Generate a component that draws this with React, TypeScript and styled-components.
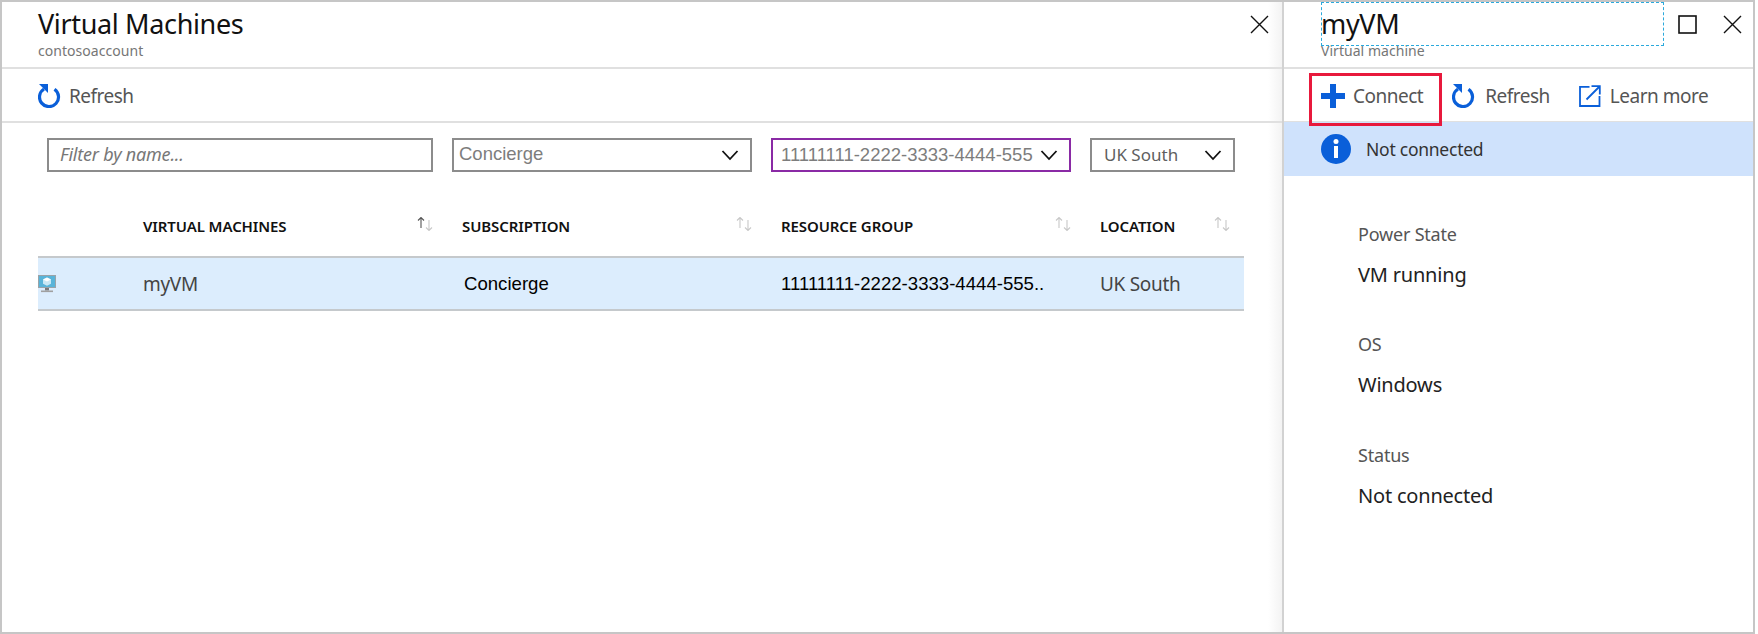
import React from "react";
import styled, { createGlobalStyle } from "styled-components";

const Global = createGlobalStyle`
  html, body { margin: 0; padding: 0; background: #fff; }
  body { font-family: "Open Sans", "Noto Sans", sans-serif; }
  * { box-sizing: border-box; }
`;

const BLUE = "#0a5fd9";
const SEGOE = `"Noto Sans", "Open Sans", sans-serif`;
const ARIAL = `"Liberation Sans", Arial, sans-serif`;

const Frame = styled.div`
  width: 1755px;
  height: 634px;
  display: flex;
  border: 2px solid #c6c6c6;
  font-family: ${SEGOE};
  overflow: hidden;
`;

const LeftPanel = styled.section`
  width: 1280px;
  flex: none;
  display: flex;
  flex-direction: column;
  background: linear-gradient(to right, #fff calc(100% - 14px), #f3f3f3);
`;

const RightPanel = styled.section`
  flex: 1;
  display: flex;
  flex-direction: column;
  position: relative;
  border-left: 2px solid #d2d2d2;
  min-width: 0;
`;

const Header = styled.header<{ $pad: number }>`
  height: 67px;
  flex: none;
  display: flex;
  align-items: flex-start;
  position: relative;
  padding-left: ${(p) => p.$pad}px;
  border-bottom: 2px solid #e0e0e0;
`;

const HeaderText = styled.div`
  flex: 1;
  display: flex;
  flex-direction: column;
`;

const Title = styled.h1`
  margin: 5px 0 0;
  font-size: 27px;
  line-height: 34px;
  font-weight: 400;
  color: #111;
  letter-spacing: -0.35px;
`;

const Subtitle = styled.div`
  font-size: 14px;
  line-height: 20px;
  color: #767676;
  letter-spacing: 0.04px;
`;

const DashedBox = styled.div`
  position: absolute;
  left: 37px;
  top: 0;
  width: 343px;
  height: 44px;
  border: 1px dashed #2aa9dc;
`;

const WindowButtons = styled.div<{ $gap: number; $right: number }>`
  display: flex;
  align-items: center;
  gap: ${(p) => p.$gap}px;
  margin: 13px ${(p) => p.$right}px 0 0;
  color: #111;
`;

const Toolbar = styled.div<{ $pad: number }>`
  height: 54px;
  flex: none;
  display: flex;
  align-items: center;
  padding: 2px 0 0 ${(p) => p.$pad}px;
  border-bottom: 2px solid #e0e0e0;
`;

const ToolButton = styled.div<{ $gap?: number; $ml?: number }>`
  display: flex;
  align-items: center;
  gap: ${(p) => p.$gap ?? 8}px;
  margin-left: ${(p) => p.$ml ?? 0}px;
  font-size: 19px;
  line-height: 26px;
  color: #555;
  letter-spacing: -0.5px;
`;

const ConnectHighlight = styled.div`
  position: absolute;
  left: 25px;
  top: 71px;
  width: 133px;
  height: 53px;
  border: 3px solid #e8193c;
`;

const RightBody = styled.div`
  display: flex;
  flex-direction: column;
  flex: 1;
`;

const FilterRow = styled.div`
  display: grid;
  grid-template-columns: 386px 300px 300px 145px;
  column-gap: 19px;
  padding: 15px 0 0 45px;
`;

const FilterBox = styled.div<{ $accent?: boolean; $arial?: boolean; $pad?: number }>`
  height: 34px;
  display: flex;
  align-items: center;
  justify-content: space-between;
  padding: 0 11px 0 ${(p) => p.$pad ?? 5}px;
  border: 2px solid ${(p) => (p.$accent ? "#8a2aa5" : "#8c8c8c")};
  font-family: ${(p) => (p.$arial ? ARIAL : SEGOE)};
  font-size: ${(p) => (p.$arial ? 18.5 : 17)}px;
  color: ${(p) => (p.$arial ? "#7d7d7d" : "#5f5f5f")};
  background: #fff;
`;

const FilterText = styled.span`
  margin-top: -2px;
`;

const FilterPlaceholder = styled(FilterText)`
  font-style: italic;
  color: #777;
  font-size: 18px;
  letter-spacing: -0.2px;
`;

const TableGrid = styled.div`
  display: grid;
  grid-template-columns: 105px 319px 319px 319px 144px;
  margin-left: 36px;
  width: 1206px;
`;

const HeadCell = styled.div<{ $right?: number }>`
  height: 84px;
  padding: 44px ${(p) => p.$right ?? 29}px 0 0;
  display: flex;
  justify-content: space-between;
  align-items: flex-start;
  font-size: 15px;
  line-height: 20px;
  font-weight: 600;
  color: #111;
  letter-spacing: -0.1px;
`;

const SortSvg = styled.svg`
  margin-top: 1px;
  flex: none;
`;

const RowCell = styled.div<{ $arial?: boolean; $x?: number; $dark?: boolean }>`
  height: 55px;
  display: flex;
  align-items: center;
  background: #dcedfd;
  border: solid #c5c9cc;
  border-width: 2px 0;
  padding-left: ${(p) => p.$x ?? 0}px;
  font-family: ${(p) => (p.$arial ? ARIAL : SEGOE)};
  font-size: ${(p) => (p.$arial ? 18.6 : 19)}px;
  color: ${(p) => (p.$dark ? "#000" : "#444")};
  letter-spacing: ${(p) => (p.$arial ? "0" : "-0.3px")};
  white-space: nowrap;
  overflow: hidden;
`;

const Banner = styled.div`
  height: 54px;
  flex: none;
  display: flex;
  align-items: center;
  gap: 15px;
  padding-left: 37px;
  margin-top: -1px;
  background: #cfe2fc;
  font-size: 17.5px;
  color: #333;
  letter-spacing: -0.25px;
`;

const Details = styled.dl`
  margin: 0;
  padding: 45px 0 0 74px;
  display: flex;
  flex-direction: column;
`;

const Label = styled.dt<{ $mt?: number }>`
  font-size: 18px;
  line-height: 26px;
  color: #555;
  margin-top: ${(p) => p.$mt ?? 0}px;
  letter-spacing: -0.2px;
`;

const Value = styled.dd`
  margin: 14px 0 0;
  font-size: 20px;
  line-height: 28px;
  color: #222;
  letter-spacing: -0.2px;
`;

const RefreshIcon = () => (
  <svg width="23" height="24" viewBox="0 0 23 24" fill="none">
    <path d="M6 5 A9.5 9.5 0 1 0 16.5 5.3" stroke={BLUE} strokeWidth="3.2" />
    <path d="M1 0 L10 0 L10 9 Z" fill={BLUE} />
  </svg>
);

const CloseIcon = () => (
  <svg width="19" height="19" viewBox="0 0 19 19" fill="none">
    <path d="M1 1 L18 18 M18 1 L1 18" stroke="#111" strokeWidth="1.4" />
  </svg>
);

const SquareIcon = () => (
  <svg width="19" height="19" viewBox="0 0 19 19" fill="none">
    <rect x="1" y="1" width="17" height="17" stroke="#111" strokeWidth="1.6" />
  </svg>
);

const Chevron = () => (
  <svg width="18" height="12" viewBox="0 0 18 12" fill="none">
    <path d="M1.5 2 L9 10 L16.5 2" stroke="#111" strokeWidth="1.8" />
  </svg>
);

const SortIcon = ({ active }: { active?: boolean }) => (
  <SortSvg width="16" height="14" viewBox="0 0 16 14" fill="none">
    <path d="M4 11 V0.5 M1 3.5 L4 0.5 L7 3.5" stroke={active ? "#555" : "#c8c8c8"} strokeWidth="1.1" />
    <path d="M12 3 V13.5 M9 10.5 L12 13.5 L15 10.5" stroke="#c8c8c8" strokeWidth="1.1" />
  </SortSvg>
);

const PlusIcon = () => (
  <svg width="24" height="24" viewBox="0 0 24 24">
    <path d="M9 0 H15 V9 H24 V15 H15 V24 H9 V15 H0 V9 H9 Z" fill={BLUE} />
  </svg>
);

const ExternalIcon = () => (
  <svg width="22" height="22" viewBox="0 0 22 22" fill="none">
    <path d="M10.5 1.8 H1 V21 H20.5 V11" stroke={BLUE} strokeWidth="1.8" />
    <path d="M7.5 14.5 L20 2 M12.5 1.2 H20.8 V9.5" stroke={BLUE} strokeWidth="1.8" />
  </svg>
);

const InfoIcon = () => (
  <svg width="30" height="30" viewBox="0 0 30 30">
    <circle cx="15" cy="15" r="15" fill={BLUE} />
    <circle cx="15" cy="7.6" r="2.5" fill="#fff" />
    <rect x="13" y="12" width="4" height="12" fill="#fff" />
  </svg>
);

const VmIcon = () => (
  <svg width="18" height="18" viewBox="0 0 18 18">
    <rect x="0" y="0" width="18" height="13" fill="#9aa3a8" />
    <rect x="1" y="1" width="16" height="11" fill="#59b4d9" />
    <path d="M9 2.5 L13 4.5 V8.7 L9 10.8 L5 8.7 V4.5 Z" fill="#c9e8f5" />
    <path d="M9 2.5 L13 4.5 L9 6.5 L5 4.5 Z" fill="#fff" />
    <rect x="7" y="13" width="4" height="2.5" fill="#7a7a7a" />
    <rect x="3" y="15.5" width="12" height="1.6" fill="#a0a0a0" />
  </svg>
);

export default function App() {
  return (
    <>
      <Global />
      <Frame>
        <LeftPanel>
          <Header $pad={36}>
            <HeaderText>
              <Title>Virtual Machines</Title>
              <Subtitle>contosoaccount</Subtitle>
            </HeaderText>
            <WindowButtons $gap={0} $right={13}>
              <CloseIcon />
            </WindowButtons>
          </Header>
          <Toolbar $pad={36}>
            <ToolButton>
              <RefreshIcon />
              Refresh
            </ToolButton>
          </Toolbar>
          <FilterRow>
            <FilterBox $pad={11}>
              <FilterPlaceholder>Filter by name...</FilterPlaceholder>
            </FilterBox>
            <FilterBox $arial>
              <FilterText>Concierge</FilterText>
              <Chevron />
            </FilterBox>
            <FilterBox $arial $accent $pad={8}>
              11111111-2222-3333-4444-555
              <Chevron />
            </FilterBox>
            <FilterBox $pad={12}>
              <FilterText>UK South</FilterText>
              <Chevron />
            </FilterBox>
          </FilterRow>
          <TableGrid>
            <HeadCell />
            <HeadCell>
              VIRTUAL MACHINES
              <SortIcon active />
            </HeadCell>
            <HeadCell>
              SUBSCRIPTION
              <SortIcon />
            </HeadCell>
            <HeadCell>
              RESOURCE GROUP
              <SortIcon />
            </HeadCell>
            <HeadCell $right={14}>
              LOCATION
              <SortIcon />
            </HeadCell>
            <RowCell>
              <VmIcon />
            </RowCell>
            <RowCell>myVM</RowCell>
            <RowCell $arial $dark $x={2}>
              Concierge
            </RowCell>
            <RowCell $arial $dark>
              11111111-2222-3333-4444-555..
            </RowCell>
            <RowCell>UK South</RowCell>
          </TableGrid>
        </LeftPanel>
        <RightPanel>
          <Header $pad={37}>
            <DashedBox />
            <HeaderText>
              <Title>myVM</Title>
              <Subtitle>Virtual machine</Subtitle>
            </HeaderText>
            <WindowButtons $gap={26} $right={11}>
              <SquareIcon />
              <CloseIcon />
            </WindowButtons>
          </Header>
          <RightBody>
            <Toolbar $pad={37}>
              <ToolButton $gap={8}>
                <PlusIcon />
                Connect
              </ToolButton>
              <ToolButton $ml={29} $gap={10}>
                <RefreshIcon />
                Refresh
              </ToolButton>
              <ToolButton $ml={29} $gap={9}>
                <ExternalIcon />
                Learn more
              </ToolButton>
            </Toolbar>
            <Banner>
              <InfoIcon />
              Not connected
            </Banner>
            <Details>
              <Label>Power State</Label>
              <Value>VM running</Value>
              <Label $mt={42}>OS</Label>
              <Value>Windows</Value>
              <Label $mt={43}>Status</Label>
              <Value>Not connected</Value>
            </Details>
          </RightBody>
          <ConnectHighlight />
        </RightPanel>
      </Frame>
    </>
  );
}
